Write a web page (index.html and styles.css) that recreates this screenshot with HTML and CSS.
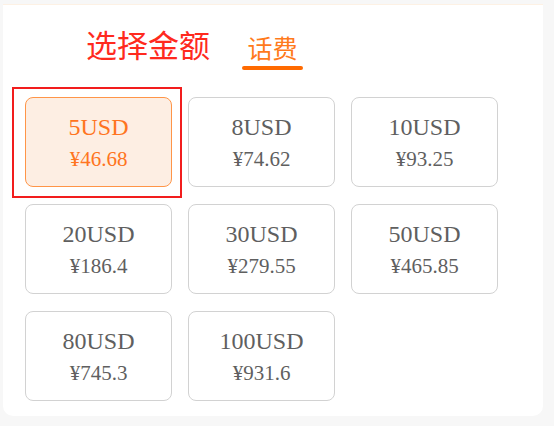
FILE: index.html
```html
<!DOCTYPE html>
<html lang="zh-CN">
<head>
    <meta charset="UTF-8">
    <meta name="viewport" content="width=device-width, initial-scale=1.0">
    <title>选择金额</title>
    <link rel="stylesheet" href="styles.css">
</head>
<body>
    <div class="card">
        <!-- Header: title + tab -->
        <div class="header">
            <h1 class="title">选择金额</h1>
            <div class="tab">
                <span class="tab-text">话费</span>
                <span class="tab-line"></span>
            </div>
        </div>

        <!-- Amount options -->
        <div class="options">
            <div class="option selected">
                <div class="amount">5USD</div>
                <div class="price">¥46.68</div>
            </div>
            <div class="option">
                <div class="amount">8USD</div>
                <div class="price">¥74.62</div>
            </div>
            <div class="option">
                <div class="amount">10USD</div>
                <div class="price">¥93.25</div>
            </div>
            <div class="option">
                <div class="amount">20USD</div>
                <div class="price">¥186.4</div>
            </div>
            <div class="option">
                <div class="amount">30USD</div>
                <div class="price">¥279.55</div>
            </div>
            <div class="option">
                <div class="amount">50USD</div>
                <div class="price">¥465.85</div>
            </div>
            <div class="option">
                <div class="amount">80USD</div>
                <div class="price">¥745.3</div>
            </div>
            <div class="option">
                <div class="amount">100USD</div>
                <div class="price">¥931.6</div>
            </div>
        </div>
    </div>
</body>
</html>
```

FILE: styles.css
```css
body {
    margin: 0;
    padding: 0;
    background-color: #f7f7f7;
    font-family: "Liberation Serif", "Noto Sans CJK SC", serif;
}

.card {
    width: 540px;
    height: 411px;
    margin: 4px 0 0 3px;
    background-color: #fff;
    border-top: 1px solid #fdf1e4;
    border-radius: 0 0 10px 10px;
}

.header {
    display: flex;
    align-items: flex-start;
    padding-top: 23px;
    height: 69px;
}

.title {
    margin: 0 0 0 83px;
    font-family: "Noto Sans CJK SC", sans-serif;
    font-size: 31px;
    font-weight: normal;
    line-height: 31px;
    color: #ff2a1e;
}

.tab {
    display: flex;
    flex-direction: column;
    align-items: center;
    width: 61px;
    margin-left: 32px;
    margin-top: 7px;
}

.tab-text {
    font-family: "Noto Sans CJK SC", sans-serif;
    font-size: 25px;
    line-height: 25px;
    color: #ff7a1c;
}

.tab-line {
    display: block;
    width: 61px;
    height: 4px;
    margin-top: 6px;
    border-radius: 2px;
    background-color: #ff6a00;
}

.options {
    display: grid;
    grid-template-columns: repeat(3, 147px);
    grid-auto-rows: 90px;
    column-gap: 16px;
    row-gap: 17px;
    padding-left: 22px;
}

.option {
    position: relative;
    display: flex;
    flex-direction: column;
    align-items: center;
    justify-content: center;
    box-sizing: border-box;
    border: 1px solid #d2d2d2;
    border-radius: 8px;
    color: #5f5f5f;
}

.amount {
    font-size: 24px;
    line-height: 30px;
}

.price {
    margin-top: 3px;
    font-size: 21px;
    line-height: 28px;
}

.option.selected {
    background-color: #fdeee3;
    border-color: #ff9548;
    color: #ff7420;
}

.option.selected::after {
    content: "";
    position: absolute;
    left: -14px;
    top: -11px;
    right: -11px;
    bottom: -12px;
    border: 2px solid #f21d1d;
}
```
